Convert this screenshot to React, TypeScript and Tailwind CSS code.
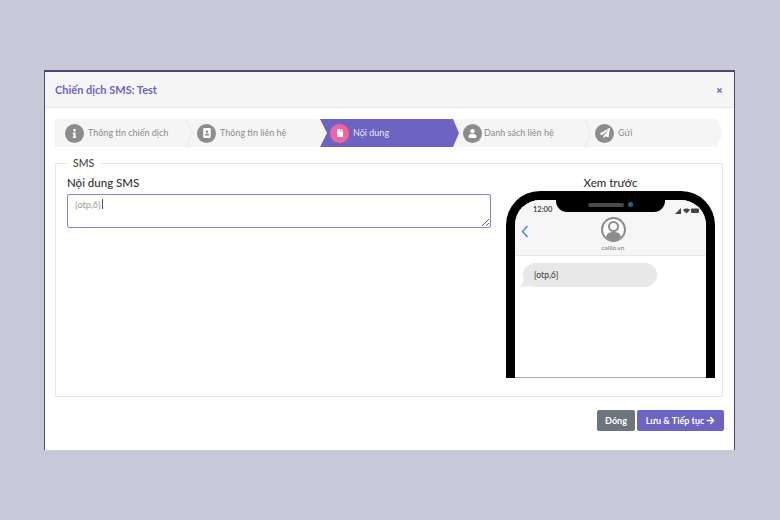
import React from "react";
import { FaArrowRight, FaFile, FaInfo, FaPaperPlane, FaPortrait, FaTimes, FaUser } from "react-icons/fa";

type Step = {
  label: string;
  icon: React.ReactNode;
  width: string;
  active?: boolean;
};

const steps: Step[] = [
  { label: "Thông tin chiến dịch", icon: <FaInfo size={9} />, width: "w-[132px]" },
  { label: "Thông tin liên hệ", icon: <FaPortrait size={10} />, width: "w-[133px]" },
  { label: "Nội dung", icon: <FaFile size={8} />, width: "w-[132px]", active: true },
  { label: "Danh sách liên hệ", icon: <FaUser size={9} />, width: "w-[133px]" },
  { label: "Gửi", icon: <FaPaperPlane size={10} />, width: "w-[138px]" },
];

const Stepper = () => (
  <div className="flex h-[28px] w-[668px] bg-[#f5f5f5] [clip-path:polygon(0_0,662px_0,668px_50%,662px_100%,0_100%)]">
    {steps.map((step, i) => (
      <div key={step.label} className={`relative flex h-full shrink-0 items-center gap-[4px] pl-[10px] ${step.width}`}>
        {step.active && (
          <div className="absolute left-0 top-0 h-full w-[139px] bg-[#6c63c3] [clip-path:polygon(0_0,133px_0,139px_50%,133px_100%,0_100%,7px_50%)]" />
        )}
        {/* separator chevron */}
        {i > 0 && !step.active && !steps[i - 1].active && (
          <svg className="absolute -left-px top-0" width="8" height="28" viewBox="0 0 8 28" fill="none">
            <path d="M0.5 0L6.5 14L0.5 28" stroke="#e9e9e9" strokeWidth="1" />
          </svg>
        )}
        <span
          className={`relative z-10 flex h-[19px] w-[19px] shrink-0 items-center justify-center rounded-full text-white ${
            step.active ? "bg-[#f2659f]" : "bg-[#8c8c8c]"
          } ${step.label === "Danh sách liên hệ" ? "-mr-[2px] ml-[1px]" : ""}`}
        >
          {step.icon}
        </span>
        <span className={`relative z-10 whitespace-nowrap text-[9px] ${step.active ? "text-[#e6e4f6]" : "text-[#8b8b8b]"}`}>
          {step.label}
        </span>
      </div>
    ))}
  </div>
);

const PhonePreview = () => (
  <div className="flex w-[209px] flex-col items-center">
    <div className="text-[11.5px] font-medium leading-[14px] text-[#333]">Xem trước</div>
    <div className="relative mt-[1px] h-[187px] w-[209px] overflow-hidden rounded-t-[34px] border-x-[9px] border-t-[9px] border-black bg-white">
      {/* notch */}
      <div className="absolute left-[41px] top-[-9px] z-10 flex h-[21px] w-[109px] items-center justify-center gap-[4px] rounded-b-[11px] bg-black pt-[6px]">
        <span className="h-[4px] w-[36px] rounded-full bg-[#4a4a4a]" />
        <span className="h-[5px] w-[5px] rounded-full bg-[#0d6e80]" />
      </div>
      <div className="relative h-[56px] border-b border-[#e6e6e6] bg-[#f6f6f6]">
        <div className="flex items-center justify-between pl-[18px] pr-[6px] pt-[5px]">
          <span className="text-[7.5px] font-semibold leading-[10px] text-[#333]">12:00</span>
          <svg width="25" height="7" viewBox="0 0 25 7" fill="#444">
            <path d="M0 7L6 1V7Z" />
            <path d="M8 3C10 1 13 1 15 3L11.500 6.500Z" />
            <rect x="16" y="1.500" width="8" height="4.500" rx="1" />
          </svg>
        </div>
        <svg className="absolute left-[6px] top-[25px]" width="8" height="13" viewBox="0 0 8 13" fill="none">
          <path d="M6.500 1L1.500 6.500L6.500 12" stroke="#4a86e8" strokeWidth="1.500" />
        </svg>
        <div className="flex flex-col items-center pl-[5px] pt-[2px]">
          <svg width="25" height="25" viewBox="0 0 25 25" fill="none">
            <circle cx="12.500" cy="12.500" r="11.500" fill="#fff" stroke="#8c8c8c" strokeWidth="2" />
            <circle cx="12.500" cy="9.500" r="4.500" stroke="#8c8c8c" strokeWidth="2" />
            <path d="M5 20C6 15.500 9 15 12.500 15C16 15 19 15.500 20 20C18 22.500 15 23.500 12.500 23.500C10 23.500 7 22.500 5 20Z" fill="#8c8c8c" />
          </svg>
          <span className="mt-[2px] text-[6.5px] leading-[8px] text-[#777]">callio.vn</span>
        </div>
      </div>
      <div className="relative ml-[8px] mt-[7px] flex h-[24px] w-[134px] items-center rounded-[12px] bg-[#e8e8e8] pl-[11px] text-[8.5px] font-medium text-[#444]">
        {"{otp,6}"}
        <svg className="absolute -left-[4px] bottom-0" width="12" height="8" viewBox="0 0 12 8" fill="#e8e8e8">
          <path d="M5 0L12 7L0 8C3 6 4.500 3 5 0Z" />
        </svg>
      </div>
      {/* bottom edge of the preview */}
      <div className="absolute bottom-0 left-0 h-px w-full bg-[#aaaaaa]" />
    </div>
  </div>
);

export default function App() {
  return (
    <div className="h-[520px] w-[780px] bg-[#c9c8d8] pl-[44px] pt-[70px] font-['Lato',sans-serif]">
      <div className="h-[380px] w-[691px] border-x border-t-2 border-[#4a4870] border-b-0 bg-white">
        <div className="flex h-[36px] items-center justify-between border-b border-[#e8e8e8] bg-[#f5f5f5] pb-[0px] pl-[10px] pr-[11px] pt-[1px]">
          <h1 className="text-[11px] font-bold text-[#6c63c3]">Chiến dịch SMS: Test</h1>
          <FaTimes size={7} className="text-[#6c63c3]" />
        </div>
        <div className="px-[10px] pt-[11px]">
          <Stepper />
          <fieldset className="mt-[10px] h-[240px] w-[668px] border border-[#e6e6e6] pl-[11px] pr-[7px]">
            <legend className="px-[6px] text-[10.5px] font-medium leading-[13px] text-[#444]">SMS</legend>
            <div className="flex justify-between pt-[6px]">
              <div className="w-[424px]">
                <label className="block text-[11.5px] font-medium leading-[14px] text-[#333]">Nội dung SMS</label>
                <div className="relative mt-[4px]">
                  <textarea
                    defaultValue="{otp,6}"
                    className="block h-[34px] w-full rounded-[2px] border border-[#8a80cc] px-[7px] pt-[3px] text-[9px] text-[#999] outline-none"
                  />
                  <span className="absolute left-[35px] top-[5px] h-[10px] w-px bg-[#555]" />
                </div>
              </div>
              <PhonePreview />
            </div>
          </fieldset>
          <div className="mt-[13px] flex justify-end gap-[2px]">
            <button className="h-[21px] w-[38px] rounded-[2px] bg-[#6c757d] text-[9px] font-bold text-white">Đóng</button>
            <button className="flex h-[21px] w-[87px] items-center justify-center gap-[2px] rounded-[2px] bg-[#6c63c3] text-[9px] font-bold text-white">
              Lưu &amp; Tiếp tục <FaArrowRight size={9} />
            </button>
          </div>
        </div>
      </div>
    </div>
  );
}
